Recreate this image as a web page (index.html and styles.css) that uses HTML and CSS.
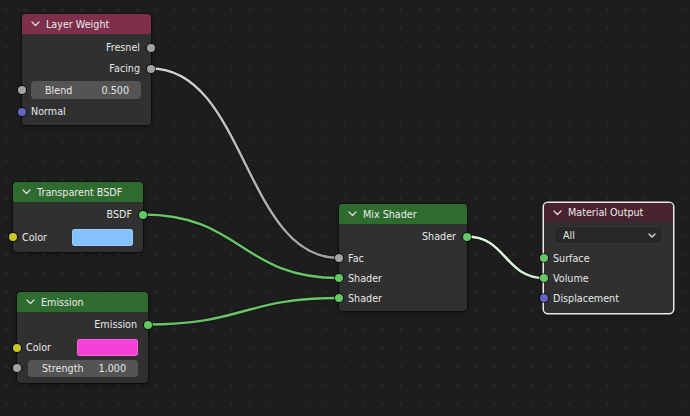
FILE: index.html
```html
<!DOCTYPE html>
<html>
<head>
<meta charset="utf-8">
<link rel="stylesheet" href="styles.css">
</head>
<body>
<div class="canvas">
  <svg class="wires" width="690" height="416" viewBox="0 0 690 416">
    <defs>
      <linearGradient id="gGrey" gradientUnits="userSpaceOnUse" x1="151" y1="68" x2="339" y2="258">
        <stop offset="0" stop-color="#d2d2d2"/>
        <stop offset="1" stop-color="#a0a0a0"/>
      </linearGradient>
      <linearGradient id="gSel" gradientUnits="userSpaceOnUse" x1="467" y1="236" x2="544" y2="278">
        <stop offset="0" stop-color="#e6f6e6"/>
        <stop offset="1" stop-color="#c8ecc8"/>
      </linearGradient>
    </defs>
    <g class="edge">
      <path d="M151,68.5 C245,68.5 245,258 339,258"/>
      <path d="M143,214.5 C241,214.5 241,278 339,278"/>
      <path d="M148,324.5 C243,324.5 244,298 339,298"/>
      <path d="M467,236.5 C506,236.5 505,278 544,278"/>
    </g>
    <path class="wire grey" d="M151,68.5 C245,68.5 245,258 339,258"/>
    <path class="wire green" d="M143,214.5 C241,214.5 241,278 339,278"/>
    <path class="wire green" d="M148,324.5 C243,324.5 244,298 339,298"/>
    <path class="wire sel" d="M467,236.5 C506,236.5 505,278 544,278"/>
  </svg>

  <div class="node n-layer">
    <div class="head h-input">
      <svg class="chev" width="9" height="6" viewBox="0 0 9 6"><polyline points="1,1 4.5,4.5 8,1"/></svg>
      <span>Layer Weight</span>
    </div>
    <div class="body pt3 pb3">
      <div class="row out"><span>Fresnel</span><i class="sock r grey"></i></div>
      <div class="row out"><span>Facing</span><i class="sock r grey"></i></div>
      <div class="row h22 fieldrow"><i class="sock l grey"></i><div class="field"><span>Blend</span><span>0.500</span></div></div>
      <div class="row"><i class="sock l violet"></i><span>Normal</span></div>
    </div>
  </div>

  <div class="node n-transp">
    <div class="head h-shader">
      <svg class="chev" width="9" height="6" viewBox="0 0 9 6"><polyline points="1,1 4.5,4.5 8,1"/></svg>
      <span>Transparent BSDF</span>
    </div>
    <div class="body pt2 pb4">
      <div class="row out"><span>BSDF</span><i class="sock r green"></i></div>
      <div class="row h22 mt1"><i class="sock l yellow"></i><span>Color</span><div class="swatch blue"></div></div>
    </div>
  </div>

  <div class="node n-emis">
    <div class="head h-shader">
      <svg class="chev" width="9" height="6" viewBox="0 0 9 6"><polyline points="1,1 4.5,4.5 8,1"/></svg>
      <span>Emission</span>
    </div>
    <div class="body pt2 pb5">
      <div class="row out"><span>Emission</span><i class="sock r green"></i></div>
      <div class="row mt2"><i class="sock l yellow"></i><span>Color</span><div class="swatch pink"></div></div>
      <div class="row h20 fieldrow"><i class="sock l grey"></i><div class="field"><span>Strength</span><span>1.000</span></div></div>
    </div>
  </div>

  <div class="node n-mix">
    <div class="head h-shader">
      <svg class="chev" width="9" height="6" viewBox="0 0 9 6"><polyline points="1,1 4.5,4.5 8,1"/></svg>
      <span>Mix Shader</span>
    </div>
    <div class="body pt2 pb3">
      <div class="row out"><span>Shader</span><i class="sock r green"></i></div>
      <div class="row h20 mt1"><i class="sock l grey"></i><span>Fac</span></div>
      <div class="row h20"><i class="sock l green"></i><span>Shader</span></div>
      <div class="row h20"><i class="sock l green"></i><span>Shader</span></div>
    </div>
  </div>

  <div class="node n-out">
    <div class="head h-output">
      <svg class="chev" width="9" height="6" viewBox="0 0 9 6"><polyline points="1,1 4.5,4.5 8,1"/></svg>
      <span>Material Output</span>
    </div>
    <div class="body pt4 pb5">
      <div class="dropdown"><span>All</span><svg class="chev small" width="8" height="5" viewBox="0 0 8 5"><polyline points="1,1 4,4 7,1"/></svg></div>
      <div class="row h20 mt4"><i class="sock l green"></i><span>Surface</span></div>
      <div class="row h20"><i class="sock l green"></i><span>Volume</span></div>
      <div class="row h20"><i class="sock l violet"></i><span>Displacement</span></div>
    </div>
  </div>
</div>
</body>
</html>
```

FILE: styles.css
```css
html, body {
  margin: 0;
  padding: 0;
  background: #1d1d1d;
}

.canvas {
  position: relative;
  width: 690px;
  height: 416px;
  overflow: hidden;
  background-color: #1d1d1d;
  background-image: radial-gradient(circle, #2a2a2a 0.9px, rgba(29,29,29,0) 1.5px);
  background-size: 18.8px 18.8px;
  background-position: 15.4px 0.6px;
  font-family: "DejaVu Sans", "Liberation Sans", sans-serif;
  font-size: 9.6px;
  color: #e8e8e8;
}

.wires {
  position: absolute;
  left: 0;
  top: 0;
}

.edge path {
  fill: none;
  stroke: #151515;
  stroke-width: 4.5;
  stroke-opacity: 0.8;
}

.wire {
  fill: none;
  stroke-width: 2.4;
  stroke-linecap: round;
}
.wire.grey { stroke: url(#gGrey); }
.wire.green { stroke: #68c468; }
.wire.sel { stroke: url(#gSel); stroke-width: 2.6; }

.node {
  position: absolute;
  background: #303030;
  border-radius: 4px;
  box-shadow: 0 0 0 1px rgba(0, 0, 0, 0.35), 0 2px 4px rgba(0, 0, 0, 0.35);
}

.n-layer { left: 22px; top: 14px; width: 129px; }
.n-transp { left: 13px; top: 182px; width: 130px; }
.n-emis { left: 17px; top: 292px; width: 131px; }
.n-mix { left: 339px; top: 204px; width: 128px; }
.n-out {
  left: 544px;
  top: 203px;
  width: 129px;
  box-shadow: 0 0 0 1.5px #e8e8e8, 0 2px 4px rgba(0, 0, 0, 0.4);
}

.head {
  height: 20px;
  display: flex;
  align-items: center;
  gap: 6px;
  padding-left: 9px;
  border-radius: 4px 4px 0 0;
  color: #ececec;
}
.n-out .head { height: 19px; }

.h-input { background: #7e2f4b; }
.h-shader { background: #2e6b2e; }
.h-output { background: #48222c; }

.chev polyline {
  fill: none;
  stroke: #dcdcdc;
  stroke-width: 1.3;
  stroke-linecap: round;
  stroke-linejoin: round;
}

.body {
  display: flex;
  flex-direction: column;
}
.pt2 { padding-top: 2px; }
.pt3 { padding-top: 3px; }
.pt4 { padding-top: 4px; }
.pb3 { padding-bottom: 3px; }
.pb4 { padding-bottom: 4px; }
.pb5 { padding-bottom: 5px; }
.mt1 { margin-top: 1px; }
.mt2 { margin-top: 2px; }
.mt4 { margin-top: 4px; }

.row {
  position: relative;
  height: 21px;
  display: flex;
  align-items: center;
  padding: 0 10px 0 9px;
}
.row.h20 { height: 20px; }
.row.h22 { height: 22px; }
.row.out {
  justify-content: flex-end;
  padding-right: 11px;
}

.sock {
  position: absolute;
  top: 50%;
  width: 8px;
  height: 8px;
  margin-top: -4px;
  border-radius: 50%;
  box-shadow: 0 0 0 1px rgba(0, 0, 0, 0.65);
}
.sock.l { left: -4px; }
.sock.r { right: -4px; }
.sock.grey { background: #a3a3a3; }
.sock.green { background: #63c763; }
.sock.yellow { background: #c7c729; }
.sock.violet { background: #6363c7; }

.field {
  flex: 1;
  height: 18px;
  display: flex;
  align-items: center;
  justify-content: space-between;
  padding: 0 12px 0 14px;
  background: #545454;
  border-radius: 4px;
  color: #e6e6e6;
}
.fieldrow { padding: 0 10px 0 9px; }
.n-emis .fieldrow { padding-left: 11px; }
.n-emis .field { height: 17px; }

.swatch {
  margin-left: auto;
  width: 61px;
  height: 17px;
  border-radius: 3px;
  box-shadow: inset 0 0 0 1px rgba(255, 255, 255, 0.18);
}
.swatch.blue { background: #84c1ff; }
.swatch.pink { background: #f542d6; }

.dropdown {
  margin: 0 10px 0 10px;
  height: 18px;
  box-sizing: border-box;
  display: flex;
  align-items: center;
  justify-content: space-between;
  padding: 0 6px 0 8px;
  background: #282828;
  border: 1px solid #363636;
  border-radius: 4px;
}
```
